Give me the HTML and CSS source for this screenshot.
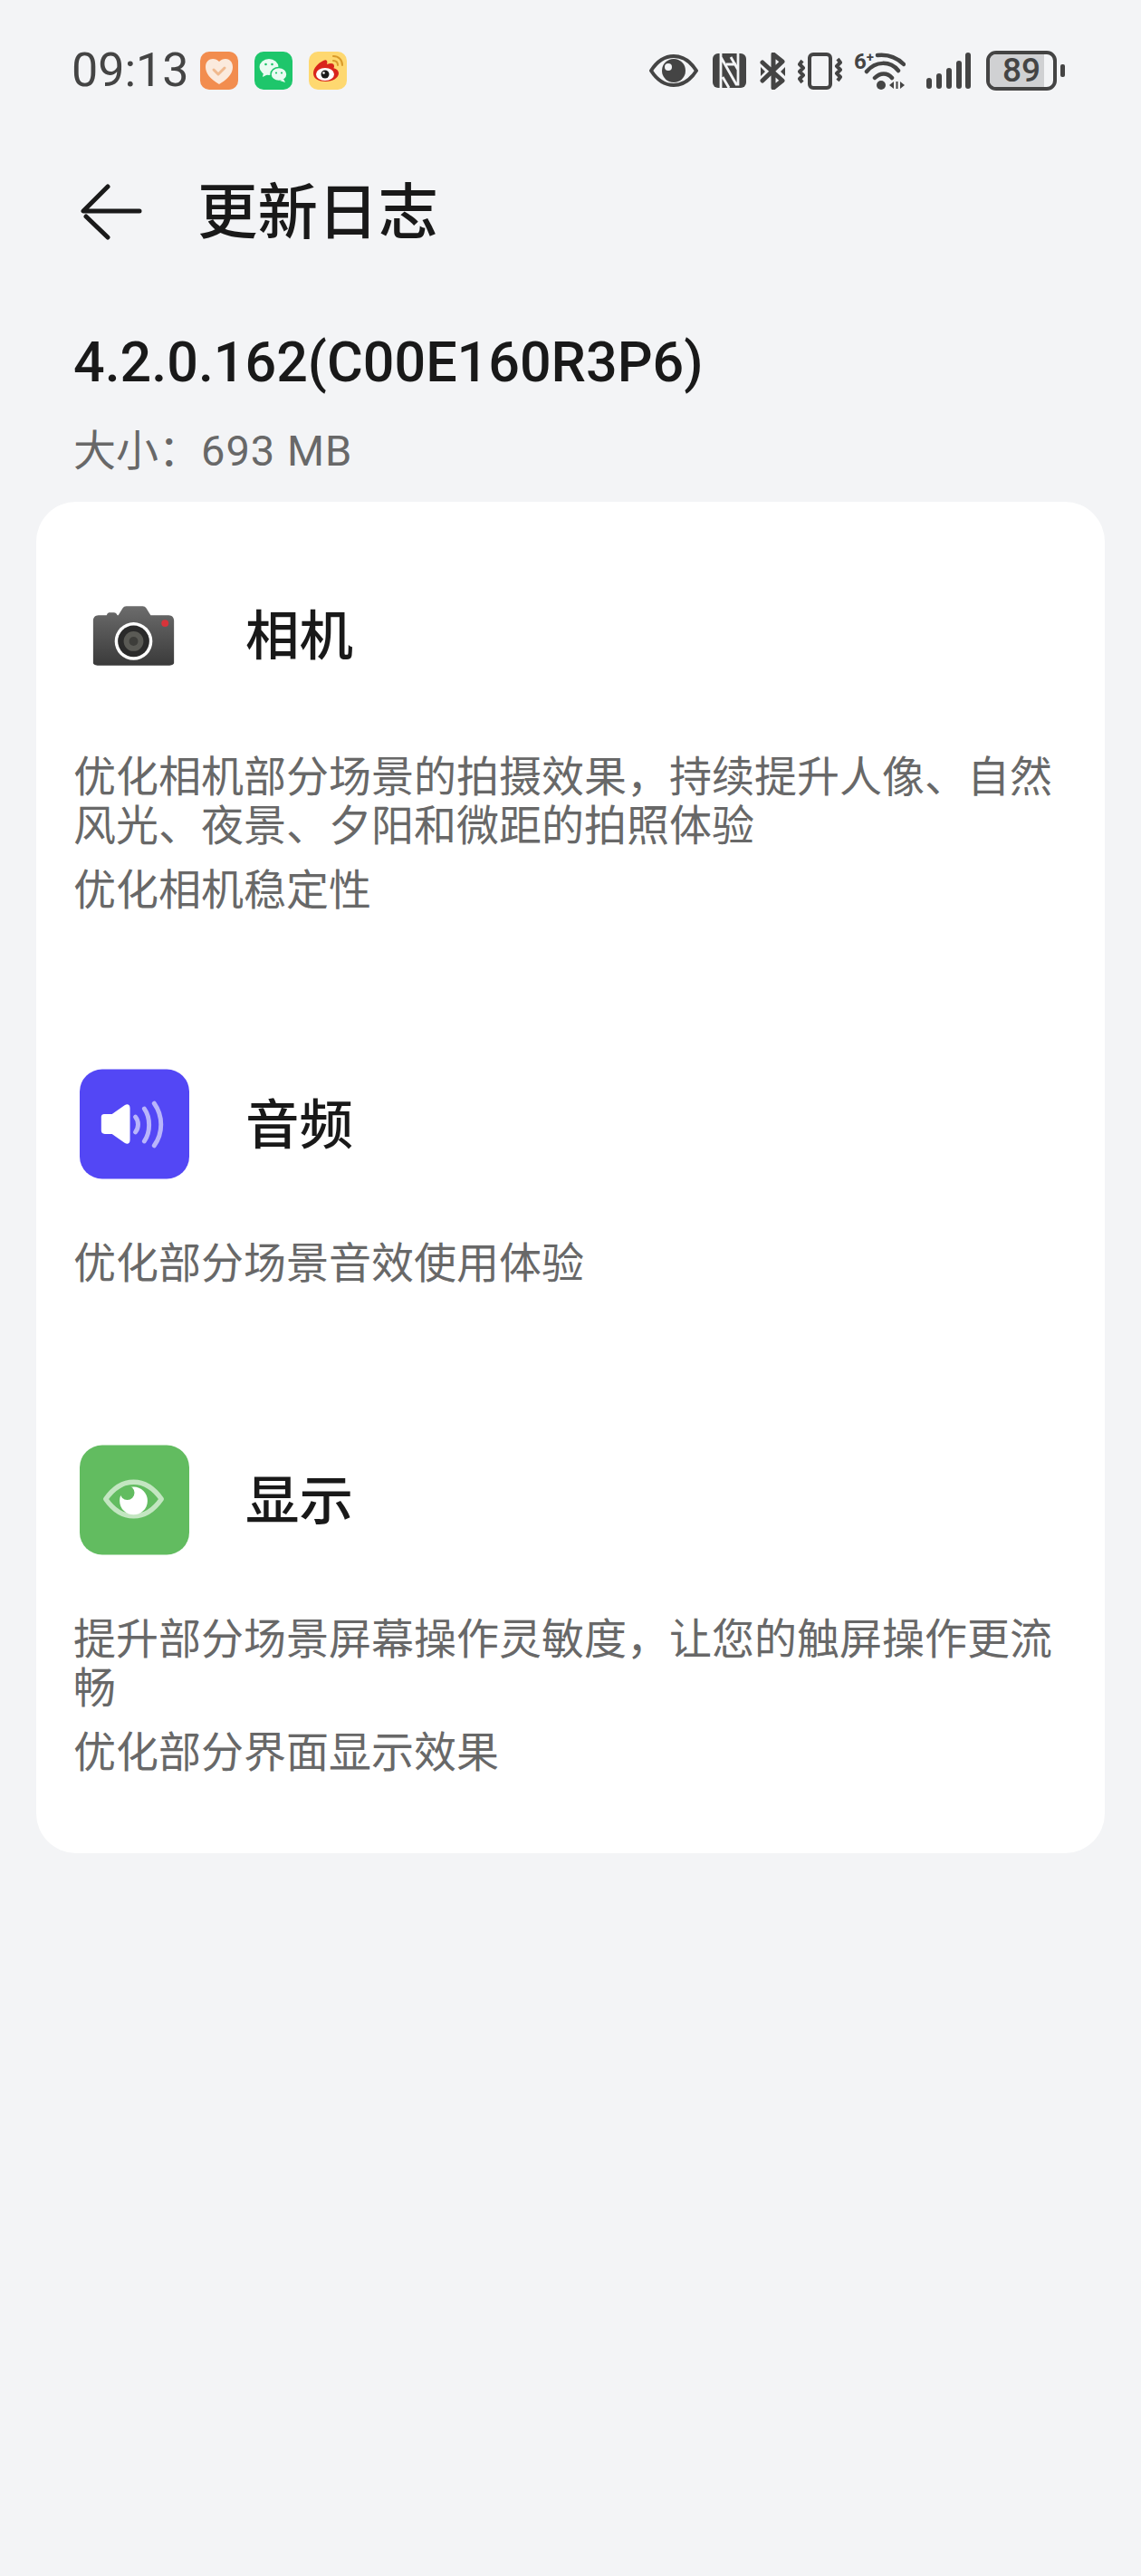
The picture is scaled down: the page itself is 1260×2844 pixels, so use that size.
FILE: index.html
```html
<!DOCTYPE html>
<html lang="zh-CN">
<head>
<meta charset="utf-8">
<title>更新日志</title>
<link rel="stylesheet" href="styles.css">
</head>
<body>
<div class="page">
  <header class="status">
    <div class="status-left">
      <span class="time">09:13</span>
      <svg class="app" viewBox="0 0 42 42"><rect width="42" height="42" rx="10" fill="#f28d4f"/><path d="M21 36C11 30 6 24 6 17c0-6 4-9 8-9 3 0 5 1 7 3 2-2 4-3 7-3 4 0 8 3 8 9 0 7-5 13-15 19z" fill="#fbeadd"/><path d="M15 20l5 5 7-7" fill="none" stroke="#f0b98e" stroke-width="3" stroke-linecap="round" stroke-linejoin="round"/></svg>
      <svg class="app" viewBox="0 0 42 42"><rect width="42" height="42" rx="10" fill="#1ec66b"/><ellipse cx="16" cy="17" rx="10.500" ry="9" fill="#eafbf2"/><path d="M10 23l-1 5 6-3z" fill="#eafbf2"/><ellipse cx="27" cy="25" rx="9" ry="7.500" stroke="#1ec66b" stroke-width="1.500" fill="#eafbf2"/><path d="M32 30l2 4-6-2z" fill="#eafbf2"/><circle cx="12.500" cy="14" r="1.300" fill="#1ec66b"/><circle cx="19.500" cy="14" r="1.300" fill="#1ec66b"/><circle cx="24" cy="23.500" r="1.100" fill="#1ec66b"/><circle cx="30" cy="23.500" r="1.100" fill="#1ec66b"/></svg>
      <svg class="app" viewBox="0 0 42 42"><rect width="42" height="42" rx="10" fill="#fed870"/><path d="M5 24c0-6 5-11 11-14 4-2 5 1 4 4 5-2 8-1 8 2 0 1 0 2-1 2 4 1 6 3 6 6 0 5-7 9-14 9C11 33 5 30 5 24z" fill="#d9241c"/><ellipse cx="18" cy="25" rx="10" ry="7" fill="#fff"/><circle cx="18" cy="25" r="4.500" fill="#1a1a1a"/><circle cx="16.500" cy="23.500" r="1.300" fill="#fff"/><path d="M27 10c3 0 5 2 5 5M27 5c6 0 10 4 10 10" fill="none" stroke="#d99a2b" stroke-width="2" stroke-linecap="round"/></svg>
    </div>
    <div class="status-right">
      <svg class="sys eye" viewBox="0 0 54 36"><path d="M2 18C9 7 18 2 27 2s18 5 25 16c-7 11-16 16-25 16S9 29 2 18z" fill="none" stroke="#444" stroke-width="4" stroke-linejoin="round"/><circle cx="27" cy="18" r="13" fill="#444"/><circle cx="21" cy="14" r="4" fill="#f3f4f6"/></svg>
      <svg class="sys nfc" viewBox="0 0 37 38"><rect width="37" height="38" rx="6" fill="#444"/><path d="M9 0v38M9 4l17 30h2V0M15 12h11M11 26l7 12M20 4l8 14" fill="none" stroke="#f3f4f6" stroke-width="2.800"/></svg>
      <svg class="sys bt" viewBox="0 0 29 41"><path d="M3 11l22 20-10 8V2l10 8L3 31" fill="none" stroke="#444" stroke-width="5" stroke-linejoin="round" stroke-linecap="round"/><path d="M1 16l5 5-5 5zM28 16l-5 5 5 5z" fill="#444"/></svg>
      <svg class="sys vib" viewBox="0 0 49 41"><rect x="13" y="2" width="23" height="37" rx="4" fill="none" stroke="#444" stroke-width="4"/><path d="M5 9l-3 4 4 4-4 4 4 4-4 4 3 4M44 7l3 4-4 4 4 4-4 4 4 4-3 4" fill="none" stroke="#444" stroke-width="4" stroke-linejoin="round"/></svg>
      <div class="wifi">
        <span class="wifi-tag">6<span class="wifi-plus">+</span></span>
        <svg viewBox="0 0 57 41"><path d="M26 3c10-1 21 2 29 10M14 21c10-12 26-12 35-1M23 28c6-6 14-6 19 0" fill="none" stroke="#444" stroke-width="4.500" stroke-linecap="round"/><circle cx="30" cy="36" r="5" fill="#444"/><path d="M39 36l5-4v8zM51 32l5 4-5 4z" fill="#444"/><path d="M47.500 32v8" stroke="#444" stroke-width="2"/></svg>
      </div>
      <svg class="sys sig" viewBox="0 0 51 40"><g stroke="#444" stroke-width="6" stroke-linecap="round"><path d="M4 31v6M15 26v11M26 20v17M37 12v25M47 3v34"/></g></svg>
      <div class="battery"><div class="batt-fill"></div><span class="batt-num">89</span></div>
      <div class="batt-nub"></div>
    </div>
  </header>

  <nav class="nav">
    <svg class="back" viewBox="0 0 68 64"><path d="M30 3L3 30h62M6 36l24 23" fill="none" stroke="#1a1a1a" stroke-width="5" stroke-linecap="round" stroke-linejoin="round"/></svg>
    <h1 class="nav-title">更新日志</h1>
  </nav>

  <div class="version">
    <div class="version-name">4.2.0.162(C00E160R3P6)</div>
    <div class="version-size">大小：<span class="size-val">693 MB</span></div>
  </div>

  <main class="card">
    <section class="sec sec-cam">
      <div class="sec-head">
        <svg class="sec-icon" viewBox="0 0 122 122"><defs><linearGradient id="cam" x1="0" y1="0" x2="0" y2="1"><stop offset="0" stop-color="#6c6c6c"/><stop offset="1" stop-color="#3a3a3a"/></linearGradient></defs><path d="M21 39h9l1-2c1-1 2-1 4-1h3c2 0 3 1 4 3h1l5-8c1-1 2-2 4-2h18c2 0 3 1 4 2l5 8h20c4 0 6 3 6 6v47c0 2-3 3-6 3H21c-3 0-6-1-6-3V45c0-3 2-6 6-6z" fill="url(#cam)"/><circle cx="60" cy="68" r="21" fill="#fff"/><circle cx="60" cy="68" r="17.500" fill="#2a2a2a"/><circle cx="60" cy="68" r="11" fill="#5a5a55"/><circle cx="60" cy="68" r="5" fill="#3d3d3a"/><circle cx="95" cy="48" r="4" fill="#d8343a"/></svg>
        <h2 class="sec-title">相机</h2>
      </div>
      <p class="line">优化相机部分场景的拍摄效果，持续提升人像、自然风光、夜景、夕阳和微距的拍照体验</p>
      <p class="line">优化相机稳定性</p>
    </section>
    <section class="sec">
      <div class="sec-head">
        <svg class="sec-icon" viewBox="0 0 122 122"><rect width="122" height="122" rx="25" fill="#5347f5"/><path d="M28 50h8l14-10c3-2 6-1 6 3v36c0 4-3 5-6 3L36 72h-8c-3 0-4-2-4-4V54c0-3 1-4 4-4z" fill="#fff"/><path d="M62 53c4 5 4 12 0 17M72 44c7 10 7 26 0 36M83 38c10 14 10 33 0 47" fill="none" stroke="#b9b5fb" stroke-width="5" stroke-linecap="round"/></svg>
        <h2 class="sec-title">音频</h2>
      </div>
      <p class="line">优化部分场景音效使用体验</p>
    </section>
    <section class="sec">
      <div class="sec-head">
        <svg class="sec-icon" viewBox="0 0 122 122"><rect width="122" height="122" rx="25" fill="#62bc60"/><path d="M29 60c9-13 20-19 31-19s22 6 31 19c-9 13-20 19-31 19s-22-6-31-19z" fill="none" stroke="#c3e6c1" stroke-width="5.500" stroke-linejoin="round"/><circle cx="60" cy="62" r="15.500" fill="#fff"/><circle cx="53" cy="53" r="8" fill="#62bc60"/></svg>
        <h2 class="sec-title">显示</h2>
      </div>
      <p class="line">提升部分场景屏幕操作灵敏度，让您的触屏操作更流畅</p>
      <p class="line">优化部分界面显示效果</p>
    </section>
  </main>
</div>
</body>
</html>
```
FILE: styles.css
```css
* { box-sizing: border-box; }
html, body { margin: 0; padding: 0; }
body {
  background: #f3f4f6;
  font-family: "Roboto", "Noto Sans CJK SC", sans-serif;
  color: #191919;
  height: 2844px;
  overflow: hidden;
}
.page { display: flex; flex-direction: column; }

.status {
  height: 168px;
  padding: 56px 84px 0 79px;
  display: flex;
  justify-content: space-between;
  align-items: flex-start;
}
.status-left { display: flex; align-items: center; height: 44px; }
.time { font-size: 52px; line-height: 44px; color: #444; width: 142px; }
.app { width: 42px; height: 42px; margin-right: 18px; display: block; }
.status-right { display: flex; align-items: center; height: 44px; }
.sys { display: block; }
.eye { width: 54px; height: 36px; margin-right: 16px; }
.nfc { width: 37px; height: 38px; margin-right: 15px; }
.bt { width: 29px; height: 41px; margin-right: 13px; }
.vib { width: 49px; height: 41px; margin-right: 13px; }
.wifi { width: 57px; height: 41px; margin-right: 22px; position: relative; }
.wifi svg { width: 57px; height: 41px; display: block; }
.wifi-tag { position: absolute; left: 0; top: -3px; font-size: 24px; line-height: 26px; font-weight: 700; color: #444; display: flex; align-items: flex-start; }
.wifi-plus { font-size: 15px; line-height: 16px; }
.sig { width: 51px; height: 40px; margin-right: 16px; }
.battery {
  width: 78px; height: 44px;
  border: 4px solid #444;
  border-radius: 11px;
  position: relative;
  background: #f3f4f6;
  display: flex; align-items: center; justify-content: center;
  overflow: hidden;
}
.batt-fill { position: absolute; left: 0; top: 0; bottom: 0; width: 85%; background: #d0d1d3; }
.batt-num { position: relative; font-size: 37px; line-height: 36px; color: #444; font-weight: 500; }
.batt-nub { width: 5px; height: 14px; background: #444; border-radius: 2px; margin-left: 4px; }

.nav {
  height: 134px;
  padding-left: 89px;
  display: flex;
  align-items: center;
}
.back { width: 68px; height: 64px; display: block; margin-right: 61px; }
.nav-title { margin: 0; font-size: 66.5px; line-height: 80px; font-weight: 500; color: #191919; }

.version { padding: 0 81px; }
.version-name { font-size: 61px; line-height: 70px; margin-top: 63px; font-weight: 500; color: #191919; }
.version-size { font-size: 47px; line-height: 60px; color: #686868; margin-top: 33px; }
.size-val { font-size: 47px; letter-spacing: 1px; }

.card {
  margin: 26px 40px 0;
  background: #fff;
  border-radius: 44px;
  height: 1492px;
  padding: 86px 41px 0 41px;
}
.sec { margin-bottom: 173px; }
.sec-cam { margin-bottom: 170px; }
.sec-head { display: flex; align-items: center; height: 122px; padding-left: 7px; margin-bottom: 66px; }
.sec-cam .sec-head { margin-bottom: 69px; }
.sec-icon { width: 121px; height: 122px; display: block; margin-right: 62px; }
.sec-title { margin: 0; padding-top: 4px; font-size: 59.5px; line-height: 70px; font-weight: 500; color: #191919; }
.line { margin: 0 0 17px; font-size: 47px; line-height: 54px; color: #686868; }
.line:last-child { margin-bottom: 0; }
```
